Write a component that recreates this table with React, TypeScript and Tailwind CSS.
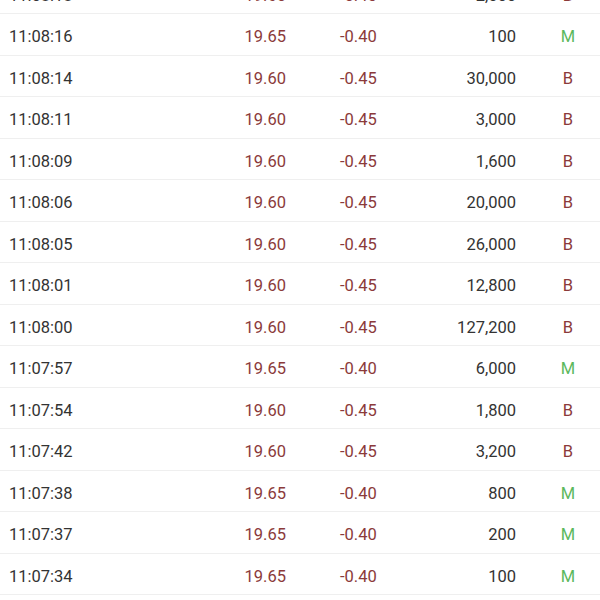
// Lista de negócios (times & trades)

type Trade = {
  time: string;
  price: string;
  change: string;
  volume: string;
  side: "M" | "B";
};

const TRADES: Trade[] = [
  { time: "11:08:18", price: "19.60", change: "-0.45", volume: "2,000", side: "B" },
  { time: "11:08:16", price: "19.65", change: "-0.40", volume: "100", side: "M" },
  { time: "11:08:14", price: "19.60", change: "-0.45", volume: "30,000", side: "B" },
  { time: "11:08:11", price: "19.60", change: "-0.45", volume: "3,000", side: "B" },
  { time: "11:08:09", price: "19.60", change: "-0.45", volume: "1,600", side: "B" },
  { time: "11:08:06", price: "19.60", change: "-0.45", volume: "20,000", side: "B" },
  { time: "11:08:05", price: "19.60", change: "-0.45", volume: "26,000", side: "B" },
  { time: "11:08:01", price: "19.60", change: "-0.45", volume: "12,800", side: "B" },
  { time: "11:08:00", price: "19.60", change: "-0.45", volume: "127,200", side: "B" },
  { time: "11:07:57", price: "19.65", change: "-0.40", volume: "6,000", side: "M" },
  { time: "11:07:54", price: "19.60", change: "-0.45", volume: "1,800", side: "B" },
  { time: "11:07:42", price: "19.60", change: "-0.45", volume: "3,200", side: "B" },
  { time: "11:07:38", price: "19.65", change: "-0.40", volume: "800", side: "M" },
  { time: "11:07:37", price: "19.65", change: "-0.40", volume: "200", side: "M" },
  { time: "11:07:34", price: "19.65", change: "-0.40", volume: "100", side: "M" },
  { time: "11:07:31", price: "19.65", change: "-0.40", volume: "500", side: "M" },
];

export default function App() {
  return (
    <div className="w-[600px] h-[600px] overflow-hidden bg-white font-['Roboto',sans-serif] text-[16.5px]">
      <div className="mt-[-27.5px]">
        {TRADES.map((t, i) => (
          <div
            key={i}
            className="grid grid-cols-[200px_86px_114px_116px_84px] items-center h-[41.5px] pt-[7px] border-b border-[#efefef]"
          >
            <span className="pl-[9px] text-[#333333]">{t.time}</span>
            <span className="text-right text-[#8b3a3a]">{t.price}</span>
            <span className="pl-[54px] text-[#8b3a3a]">{t.change}</span>
            <span className="text-right text-[#333333]">{t.volume}</span>
            <span
              className={`pl-[20px] text-center ${t.side === "M" ? "text-[#5cb85c]" : "text-[#8b3a3a]"}`}
            >
              {t.side}
            </span>
          </div>
        ))}
      </div>
    </div>
  );
}
